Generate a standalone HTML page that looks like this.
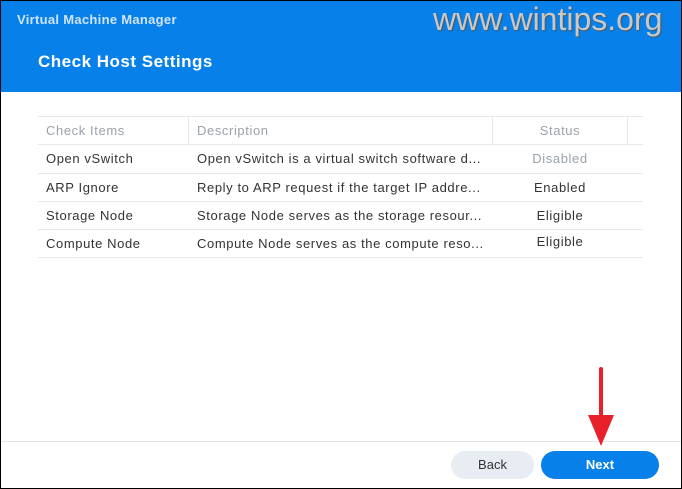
<!DOCTYPE html><html><head><style>
body{margin:0;width:682px;height:489px;overflow:hidden;font-family:"Liberation Sans","DejaVu Sans",sans-serif;}
.f{position:absolute;left:0;top:0;width:680px;height:487px;border:1px solid #000;background:#fff;}
.hd{position:absolute;left:0;top:0;width:680px;height:91px;background:#0780ea;}
.t1{position:absolute;left:16px;top:11px;color:#cfe4fb;font-size:13px;font-weight:bold;letter-spacing:0.3px;}
.t2{position:absolute;left:37px;top:51px;color:#fff;font-size:17px;font-weight:bold;letter-spacing:0.5px;}
.wm{position:absolute;left:432px;top:0px;color:#c8c8c8;font-size:32px;text-shadow:1px 1px 1px #555;}
.tb{position:absolute;left:37px;top:115px;width:605px;font-size:13px;color:#333;letter-spacing:0.6px;}
.r{position:relative;height:27.3px;border-bottom:1px solid #e6eaef;}
.r span{position:absolute;top:6px;}
.h{border-top:1px solid #e6eaef;color:#9aa2ab;}
.c1{left:8px}.c2{left:159px}.c3{left:455px;width:134px;text-align:center}
.vl{position:absolute;top:0;height:27px;border-left:1px solid #e6eaef;}
.ft{position:absolute;left:0;top:440px;width:680px;border-top:1px solid #dfe4ea;}
.b{position:absolute;top:450px;height:28px;border-radius:14px;font-size:13px;text-align:center;line-height:28px;}
</style></head><body><div class="f">
<div class="hd"><div class="t1">Virtual Machine Manager</div><div class="t2">Check Host Settings</div><div class="wm">www.wintips.org</div></div>
<div class="tb">
<div class="r h"><span class="c1">Check Items</span><span class="c2">Description</span><span class="c3">Status</span><div class="vl" style="left:150px"></div><div class="vl" style="left:454px"></div><div class="vl" style="left:589px"></div></div>
<div class="r"><span class="c1">Open vSwitch</span><span class="c2">Open vSwitch is a virtual switch software d...</span><span class="c3" style="color:#9aa2ab">Disabled</span></div>
<div class="r"><span class="c1">ARP Ignore</span><span class="c2">Reply to ARP request if the target IP addre...</span><span class="c3">Enabled</span></div>
<div class="r"><span class="c1">Storage Node</span><span class="c2">Storage Node serves as the storage resour...</span><span class="c3">Eligible</span></div>
<div class="r"><span class="c1">Compute Node</span><span class="c2">Compute Node serves as the compute reso...</span><span class="c3" style="top:4px">Eligible</span></div>
</div>
<div class="ft"></div>
<div class="b" style="left:450px;width:83px;background:#e8edf3;color:#333">Back</div>
<div class="b" style="left:540px;width:118px;background:#0780ea;color:#fff;font-weight:bold">Next</div>
<svg style="position:absolute;left:0;top:0" width="680" height="487"><line x1="600" y1="368" x2="600" y2="418" stroke="#e8202a" stroke-width="4" stroke-linecap="round"/><polygon points="587,414 613,414 600,445" fill="#e8202a"/></svg>
</div></body></html>
